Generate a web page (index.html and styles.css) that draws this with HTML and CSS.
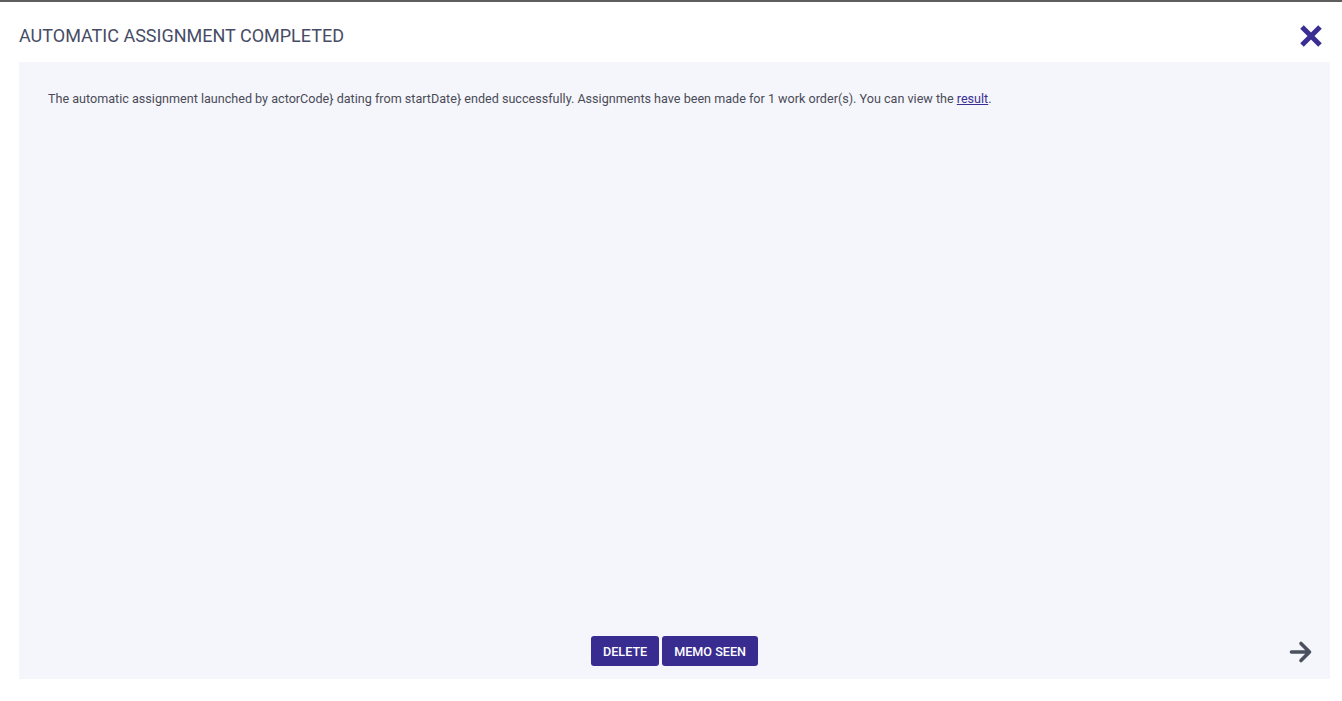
FILE: index.html
```html
<!DOCTYPE html>
<html>
<head>
<meta charset="utf-8">
<link rel="stylesheet" href="styles.css">
</head>
<body>
<div class="topbar"></div>
<div class="dialog">
  <div class="header">
    <h1 class="title">AUTOMATIC ASSIGNMENT COMPLETED</h1>
    <button class="close" aria-label="Close">
      <svg width="24" height="24" viewBox="0 0 24 24"><path d="M3 3 L21 21 M21 3 L3 21" stroke="#3a2e93" stroke-width="5" stroke-linecap="butt"/></svg>
    </button>
  </div>
  <div class="panel">
    <p class="message">The automatic assignment launched by actorCode} dating from startDate} ended successfully. Assignments have been made for 1 work order(s). You can view the <a href="#" class="link">result</a>.</p>
    <div class="footer">
      <div class="actions">
        <button class="btn">DELETE</button>
        <button class="btn">MEMO SEEN</button>
      </div>
      <button class="next" aria-label="Next">
        <svg width="24" height="24" viewBox="0 0 24 24"><path d="M2.5 12 H20 M12 3.5 L20.5 12 L12 20.5" fill="none" stroke="#4a505e" stroke-width="3.6" stroke-linecap="round" stroke-linejoin="round"/></svg>
      </button>
    </div>
  </div>
</div>
</body>
</html>
```

FILE: styles.css
```css
html, body {
  margin: 0;
  padding: 0;
  background: #ffffff;
  font-family: Roboto, "Liberation Sans", sans-serif;
}
.topbar {
  height: 2px;
  background: #5e5e5e;
}
.dialog {
  padding: 0 12px 0 19px;
}
.header {
  height: 60px;
  display: flex;
  align-items: center;
  justify-content: space-between;
}
.title {
  margin: 0;
  font-size: 18px;
  font-weight: 400;
  color: #474c66;
  padding-top: 7px;
}
.close {
  border: 0;
  background: none;
  padding: 0;
  margin-right: 7px;
  margin-top: 7px;
  display: flex;
  cursor: pointer;
}
.panel {
  background: #f5f6fb;
  height: 617px;
  display: flex;
  flex-direction: column;
  justify-content: space-between;
}
.message {
  margin: 0;
  padding: 29px 29px 0;
  font-size: 12.6px;
  color: #4a4b57;
}
.link {
  color: #3a2e93;
  text-decoration: underline;
}
.footer {
  position: relative;
  display: flex;
  justify-content: center;
  padding-bottom: 13px;
}
.actions {
  display: flex;
  gap: 3px;
}
.btn {
  height: 30px;
  border: 0;
  border-radius: 3px;
  background: #392c91;
  color: #ffffff;
  font-family: Roboto, "Liberation Sans", sans-serif;
  font-size: 12.6px;
  font-weight: 500;
  padding: 0 12px;
  cursor: pointer;
}
.next {
  position: absolute;
  right: 17px;
  top: 4px;
  border: 0;
  background: none;
  padding: 0;
  display: flex;
}
```
